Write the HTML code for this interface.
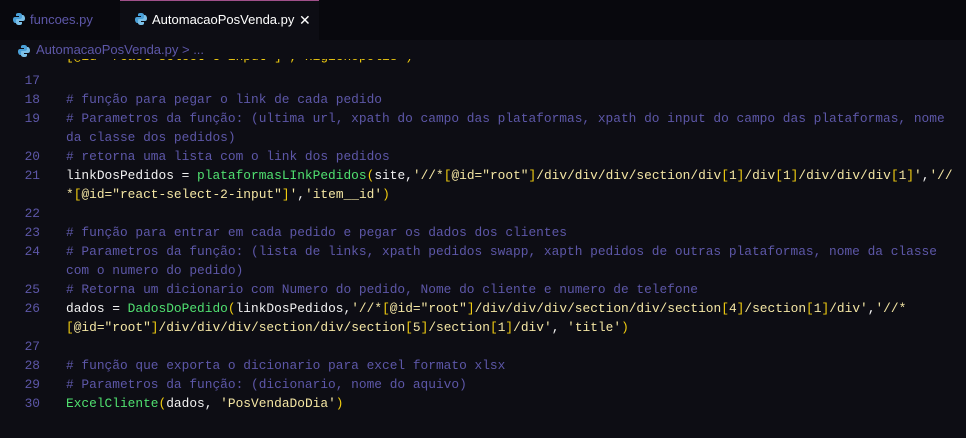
<!DOCTYPE html>
<html><head><meta charset="utf-8"><style>
body{margin:0;width:966px;height:438px;background:#0d0d14;overflow:hidden;font-family:"Liberation Sans",sans-serif;position:relative}
.tabs{position:absolute;left:0;top:0;width:966px;height:40px;background:#08080d}
.tab{position:absolute;top:0;height:40px;line-height:40px;font-size:13px}
.t1{left:0;width:120px;color:#5d57a8}
.t2{left:120px;width:199px;background:#0d0d14;border-top:1px solid #a0508a;box-sizing:border-box;color:#fff}
.ico{position:absolute;top:13px;width:12px;height:12px}
.bc{position:absolute;top:40px;left:0;height:19px;line-height:22px;font-size:13px;color:#5d57a8;width:966px;background:#0d0d14}
.code{position:absolute;left:0;top:52px;font-family:"Liberation Mono","DejaVu Sans Mono",monospace;font-size:12.85px;}
.l{position:relative;height:19px;line-height:19px;white-space:pre;color:#f2f2f2}
.n{position:absolute;left:0;width:40px;text-align:right;color:#5d57a8}
.c{position:absolute;left:66px}
.cm{color:#5d57a8}.f{color:#50e070}.s{color:#f4e6a4}.p{color:#f0cc10}
</style></head><body>
<div class="tabs">
<div class="tab t1"><svg class="ico" style="left:13px" viewBox="0 0 12 12"><path d="M6 0C3 0 3 1 3 2v1h3v1H2C0 4 0 6 0 7s1 3 2 3h1V8c0-1 1-2 2-2h3c1 0 1-1 1-2V2c0-1-1-2-3-2z" fill="#4aa0d8"/><path d="M6 12c3 0 3-1 3-2V9H6V8h4c2 0 2-2 2-3s-1-3-2-3H9v2c0 1-1 2-2 2H4c-1 0-1 1-1 2v2c0 1 1 2 3 2z" fill="#7cc0e8"/></svg><span style="position:absolute;left:30px">funcoes.py</span></div>
<div class="tab t2"><svg class="ico" style="left:15px;top:12px" viewBox="0 0 12 12"><path d="M6 0C3 0 3 1 3 2v1h3v1H2C0 4 0 6 0 7s1 3 2 3h1V8c0-1 1-2 2-2h3c1 0 1-1 1-2V2c0-1-1-2-3-2z" fill="#4aa0d8"/><path d="M6 12c3 0 3-1 3-2V9H6V8h4c2 0 2-2 2-3s-1-3-2-3H9v2c0 1-1 2-2 2H4c-1 0-1 1-1 2v2c0 1 1 2 3 2z" fill="#7cc0e8"/></svg><span style="position:absolute;left:32px;top:-1px">AutomacaoPosVenda.py</span><span style="position:absolute;left:179px;top:-1px;font-size:14px">✕</span></div>
</div>
<div class="code">
<div class="l" style="height:19px"><span class="c p" style="top:-5px">[@id="react-select-3-input"]','Higienopolis')</span></div>
<div class="l"><span class="n">17</span></div>
<div class="l"><span class="n">18</span><span class="c cm"># função para pegar o link de cada pedido</span></div>
<div class="l"><span class="n">19</span><span class="c cm"># Parametros da função: (ultima url, xpath do campo das plataformas, xpath do input do campo das plataformas, nome</span></div>
<div class="l"><span class="c cm">da classe dos pedidos)</span></div>
<div class="l"><span class="n">20</span><span class="c cm"># retorna uma lista com o link dos pedidos</span></div>
<div class="l"><span class="n">21</span><span class="c">linkDosPedidos = <span class="f">plataformasLInkPedidos</span><span class="p">(</span>site,<span class="s">'//*</span><span class="p">[</span><span class="s">@id="root"</span><span class="p">]</span><span class="s">/div/div/div/section/div</span><span class="p">[</span><span class="s">1</span><span class="p">]</span><span class="s">/div</span><span class="p">[</span><span class="s">1</span><span class="p">]</span><span class="s">/div/div/div</span><span class="p">[</span><span class="s">1</span><span class="p">]</span><span class="s">'</span>,<span class="s">'//</span></span></div>
<div class="l"><span class="c"><span class="s">*</span><span class="p">[</span><span class="s">@id="react-select-2-input"</span><span class="p">]</span><span class="s">'</span>,<span class="s">'item__id'</span><span class="p">)</span></span></div>
<div class="l"><span class="n">22</span></div>
<div class="l"><span class="n">23</span><span class="c cm"># função para entrar em cada pedido e pegar os dados dos clientes</span></div>
<div class="l"><span class="n">24</span><span class="c cm"># Parametros da função: (lista de links, xpath pedidos swapp, xapth pedidos de outras plataformas, nome da classe</span></div>
<div class="l"><span class="c cm">com o numero do pedido)</span></div>
<div class="l"><span class="n">25</span><span class="c cm"># Retorna um dicionario com Numero do pedido, Nome do cliente e numero de telefone</span></div>
<div class="l"><span class="n">26</span><span class="c">dados = <span class="f">DadosDoPedido</span><span class="p">(</span>linkDosPedidos,<span class="s">'//*</span><span class="p">[</span><span class="s">@id="root"</span><span class="p">]</span><span class="s">/div/div/div/section/div/section</span><span class="p">[</span><span class="s">4</span><span class="p">]</span><span class="s">/section</span><span class="p">[</span><span class="s">1</span><span class="p">]</span><span class="s">/div'</span>,<span class="s">'//*</span></span></div>
<div class="l"><span class="c"><span class="p">[</span><span class="s">@id="root"</span><span class="p">]</span><span class="s">/div/div/div/section/div/section</span><span class="p">[</span><span class="s">5</span><span class="p">]</span><span class="s">/section</span><span class="p">[</span><span class="s">1</span><span class="p">]</span><span class="s">/div'</span>, <span class="s">'title'</span><span class="p">)</span></span></div>
<div class="l"><span class="n">27</span></div>
<div class="l"><span class="n">28</span><span class="c cm"># função que exporta o dicionario para excel formato xlsx</span></div>
<div class="l"><span class="n">29</span><span class="c cm"># Parametros da função: (dicionario, nome do aquivo)</span></div>
<div class="l"><span class="n">30</span><span class="c"><span class="f">ExcelCliente</span><span class="p">(</span>dados, <span class="s">'PosVendaDoDia'</span><span class="p">)</span></span></div>
</div>
<div class="bc"><svg class="ico" style="left:18px;top:5px" viewBox="0 0 12 12"><path d="M6 0C3 0 3 1 3 2v1h3v1H2C0 4 0 6 0 7s1 3 2 3h1V8c0-1 1-2 2-2h3c1 0 1-1 1-2V2c0-1-1-2-3-2z" fill="#4aa0d8"/><path d="M6 12c3 0 3-1 3-2V9H6V8h4c2 0 2-2 2-3s-1-3-2-3H9v2c0 1-1 2-2 2H4c-1 0-1 1-1 2v2c0 1 1 2 3 2z" fill="#7cc0e8"/></svg><span style="position:absolute;left:36px;top:-1px">AutomacaoPosVenda.py &gt; ...</span></div>
</body></html>
